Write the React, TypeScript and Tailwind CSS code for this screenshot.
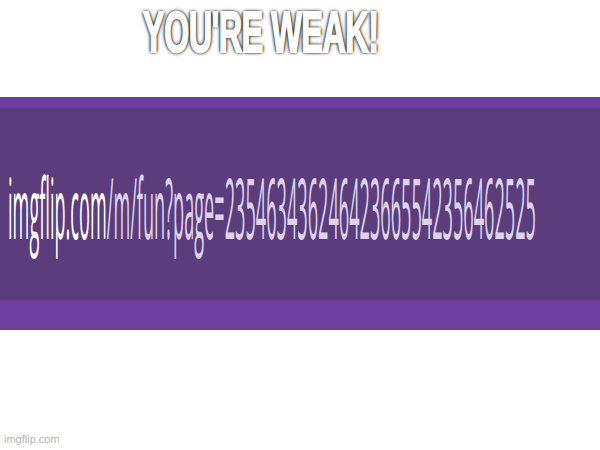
export default function App() {
  return (
    <div className="relative flex h-[450px] w-[600px] flex-col overflow-hidden bg-white">
      {/* meme caption */}
      <div className="flex h-[97px] justify-center pr-[78px]">
        <span className="inline-block origin-top scale-x-[0.57] font-['Liberation_Sans',sans-serif] text-[57px] leading-[65px] font-bold tracking-[-1px] text-white [-webkit-text-stroke:2px_#fff] [text-shadow:0_0_3px_#000,0_0_4px_#000,0_0_6px_#000]">
          YOU'RE WEAK!
        </span>
      </div>
      {/* squashed address bar */}
      <div className="h-[11px] bg-[#6e3f9e]" />
      <div className="flex h-[192px] items-center overflow-hidden bg-[#5b3c7c] pt-[5px] pl-[8px]">
        <span className="inline-block origin-left scale-x-[0.216] font-['Open_Sans',sans-serif] text-[84px] leading-none whitespace-nowrap text-[#ddd4ea]">
          <span className="text-white">imgflip.com</span>/m/fun?page=235463436246423665542356462525
        </span>
      </div>
      <div className="h-[30px] bg-[#6e3f9e]" />
      <div className="flex-1" />
      <div className="px-[4px] pb-[3px] font-['Liberation_Sans',sans-serif] text-[11px] text-[#b4b4b4]">
        imgflip.com
      </div>
    </div>
  );
}
